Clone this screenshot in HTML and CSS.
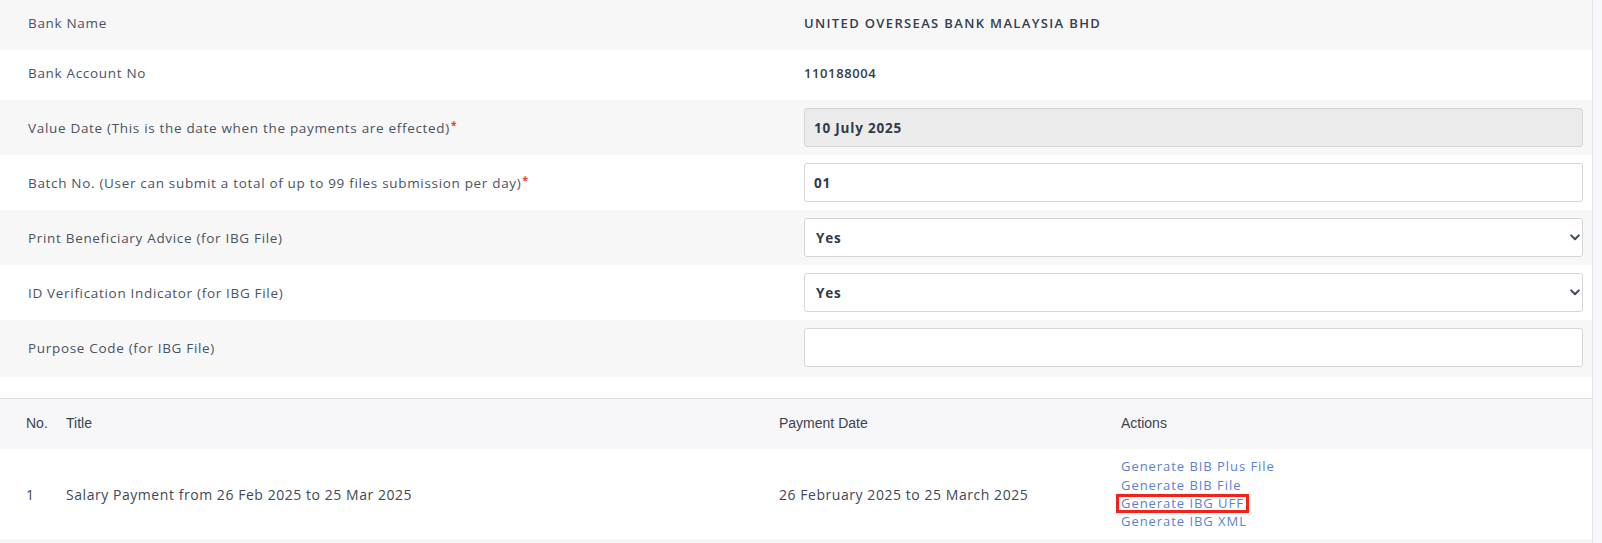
FILE: index.html
```html
<!DOCTYPE html>
<html lang="en">
<head>
<meta charset="utf-8">
<title>Bank File Generation</title>
<link rel="stylesheet" href="styles.css">
</head>
<body>
<div class="page">
  <main class="content">
    <section class="form">
      <div class="row alt">
        <div class="label">Bank Name</div>
        <div class="value static caps">UNITED OVERSEAS BANK MALAYSIA BHD</div>
      </div>
      <div class="row">
        <div class="label">Bank Account No</div>
        <div class="value static digits">110188004</div>
      </div>
      <div class="row alt field">
        <div class="label">Value Date (This is the date when the payments are effected)<span class="req">*</span></div>
        <div class="value"><input class="input disabled" type="text" value="10 July 2025" disabled></div>
      </div>
      <div class="row field">
        <div class="label">Batch No. (User can submit a total of up to 99 files submission per day)<span class="req">*</span></div>
        <div class="value"><input class="input" type="text" value="01"></div>
      </div>
      <div class="row alt field">
        <div class="label">Print Beneficiary Advice (for IBG File)</div>
        <div class="value">
          <div class="select-wrap">
            <select class="input select"><option>Yes</option><option>No</option></select>
            <svg class="chev" width="10" height="7" viewBox="0 0 10 7"><path d="M1.2 1.4 L5 5.2 L8.8 1.4" fill="none" stroke="#3d4757" stroke-width="2" stroke-linecap="round" stroke-linejoin="round"/></svg>
          </div>
        </div>
      </div>
      <div class="row field">
        <div class="label">ID Verification Indicator (for IBG File)</div>
        <div class="value">
          <div class="select-wrap">
            <select class="input select"><option>Yes</option><option>No</option></select>
            <svg class="chev" width="10" height="7" viewBox="0 0 10 7"><path d="M1.2 1.4 L5 5.2 L8.8 1.4" fill="none" stroke="#3d4757" stroke-width="2" stroke-linecap="round" stroke-linejoin="round"/></svg>
          </div>
        </div>
      </div>
      <div class="row alt field last">
        <div class="label">Purpose Code (for IBG File)</div>
        <div class="value"><input class="input" type="text" value=""></div>
      </div>
    </section>

    <section class="table-wrap">
      <table class="grid">
        <colgroup>
          <col class="c-no"><col class="c-title"><col class="c-date"><col class="c-act">
        </colgroup>
        <thead>
          <tr>
            <th class="no">No.</th>
            <th>Title</th>
            <th>Payment Date</th>
            <th>Actions</th>
          </tr>
        </thead>
        <tbody>
          <tr>
            <td class="no">1</td>
            <td>Salary Payment from 26 Feb 2025 to 25 Mar 2025</td>
            <td>26 February 2025 to 25 March 2025</td>
            <td>
              <div class="actions">
                <a href="#" class="link">Generate BIB Plus File</a>
                <a href="#" class="link">Generate BIB File</a>
                <a href="#" class="link highlight">Generate IBG UFF</a>
                <a href="#" class="link">Generate IBG XML</a>
              </div>
            </td>
          </tr>
        </tbody>
      </table>
    </section>
  </main>
  <div class="gutter"></div>
</div>
</body>
</html>
```

FILE: styles.css
```css
* { box-sizing: border-box; }
html, body { margin: 0; padding: 0; }
body {
  font-family: "Open Sans", "Liberation Sans", sans-serif;
  color: #4a5363;
  background: #f5f5f6;
}
.page {
  display: flex;
  min-height: 543px;
}
.content {
  width: 1592px;
  flex: none;
  background: #ffffff;
  align-self: flex-start;
}
.gutter {
  flex: 1;
  background: #f7f8fc;
  border-left: 1px solid #e6e6ea;
}

/* form */
.form { padding-bottom: 21px; }
.row {
  display: grid;
  grid-template-columns: 804px 1fr;
  align-items: center;
  height: 50px;
  padding-right: 9px;
  padding-bottom: 4px;
  background: #ffffff;
}
.row.alt { background: #f7f7f7; }
.row.field { height: 55px; padding-bottom: 0; }
.row.field.last { height: 57px; padding-bottom: 2px; }
.label {
  padding-left: 28px;
  font-size: 13.5px;
  letter-spacing: 0.68px;
  color: #4a5363;
}
.req { color: #f03a2a; font-size: 10px; font-weight: 700; vertical-align: 4px; margin-left: 1px; letter-spacing: 0; }
.value.static {
  font-size: 13px;
  font-weight: 600;
  color: #333e4e;
}
.value.caps { letter-spacing: 1.35px; }
.value.digits { letter-spacing: 0.6px; }
.input {
  display: block;
  width: 100%;
  height: 39px;
  border: 1px solid #d6d6d6;
  border-radius: 3px;
  background: #ffffff;
  padding: 0 9px;
  font-family: "Open Sans", "Liberation Sans", sans-serif;
  font-size: 13.5px;
  font-weight: 700;
  letter-spacing: 0.8px;
  color: #2f3a4a;
  outline: none;
}
.input.disabled { background: #ebebeb; color: #2f3a4a; -webkit-text-fill-color: #2f3a4a; opacity: 1; }
.select-wrap { position: relative; }
.select { appearance: none; -webkit-appearance: none; padding-left: 11px; }
.chev { position: absolute; right: 3px; top: 16px; pointer-events: none; }

/* table */
.table-wrap { border-top: 1px solid #dcdcdc; }
.grid {
  width: 100%;
  border-collapse: collapse;
  table-layout: fixed;
}
.c-no { width: 66px; }
.c-title { width: 713px; }
.c-date { width: 342px; }
.grid th {
  height: 50px;
  background: #f7f7f9;
  text-align: left;
  font-family: "Liberation Sans", Arial, sans-serif;
  font-weight: 400;
  font-size: 14px;
  color: #3a4350;
  padding: 0 0 2px 0;
}
.grid th.no { padding-left: 26px; }
.grid td {
  height: 90px;
  padding: 0;
  font-size: 14px;
  letter-spacing: 0.55px;
  color: #3e4858;
  vertical-align: middle;
}
.grid td.no { padding-left: 26px; }
.actions { display: flex; flex-direction: column; }
.link {
  display: block;
  align-self: flex-start;
  position: relative;
  font-size: 13px;
  line-height: 18.3px;
  letter-spacing: 0.95px;
  color: #5b7fd6;
  text-decoration: none;
}
.highlight::after {
  content: "";
  position: absolute;
  left: -5px;
  right: -5px;
  top: 0;
  bottom: -1px;
  border: 3px solid #f2231a;
}
```
